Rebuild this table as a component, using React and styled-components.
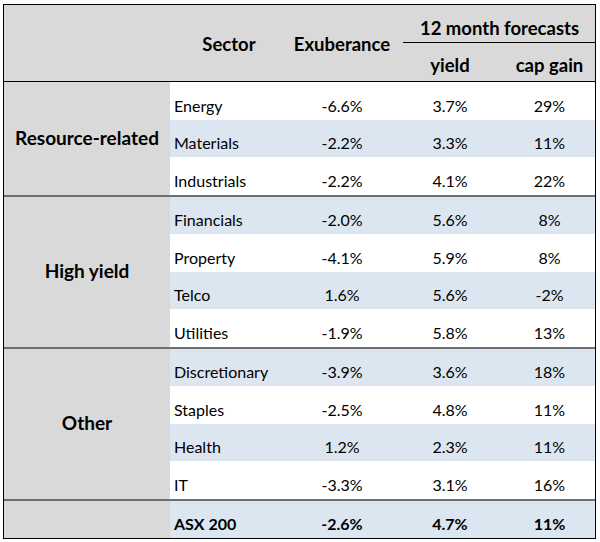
import React from 'react';
import styled, { createGlobalStyle } from 'styled-components';

const GlobalStyle = createGlobalStyle`
  html, body {
    margin: 0;
    background: #ffffff;
  }
  body {
    font-family: Lato, "Open Sans", sans-serif;
    color: #000;
  }
`;

const Page = styled.div`
  padding: 4px 4px 3px 3px;
  width: 600px;
  box-sizing: border-box;
`;

const Table = styled.div`
  border: 1px solid #000;
  width: 593px;
  box-sizing: border-box;
`;

const COLS = '166px 118px 108px 108px 1fr';

const Header = styled.div`
  display: grid;
  grid-template-columns: ${COLS};
  height: 77px;
  background: #d9d9d9;
  border-bottom: 1px solid #000;
  box-sizing: border-box;
  font-weight: 700;
  font-size: 18.5px;
`;

const HeadCell = styled.div`
  display: flex;
  align-items: center;
  justify-content: center;
  padding-top: 1px;
`;

const Forecasts = styled.div`
  grid-column: 4 / span 2;
  display: grid;
  grid-template-columns: 108px 1fr;
  grid-template-rows: 38px 1fr;
`;

const ForecastTitle = styled.div`
  grid-column: 1 / span 2;
  margin-left: 7px;
  border-bottom: 1px solid #000;
  display: flex;
  align-items: flex-end;
  justify-content: center;
  padding-bottom: 3px;
  padding-left: 1px;
`;

const SubHead = styled.div`
  display: flex;
  align-items: center;
  justify-content: center;
  padding-top: 6px;
`;

const Group = styled.div`
  display: grid;
  grid-template-columns: 166px 1fr;
  border-top: ${(p) => (p.$first ? 'none' : '2px solid #6f6f6f')};
`;

const GroupLabel = styled.div`
  background: #d9d9d9;
  display: flex;
  align-items: center;
  justify-content: center;
  font-weight: 700;
  font-size: 19px;
  padding-bottom: 2px;
`;

const Row = styled.div`
  display: grid;
  grid-template-columns: 118px 108px 108px 1fr;
  height: 37.5px;
  background: ${(p) => (p.$shaded ? '#dce6f1' : '#ffffff')};
  font-size: 16px;
  font-weight: ${(p) => (p.$bold ? 700 : 400)};
`;

const Cell = styled.div`
  display: flex;
  align-items: flex-end;
  justify-content: ${(p) => (p.$left ? 'flex-start' : 'center')};
  padding-left: ${(p) => (p.$left ? '4px' : '0')};
  padding-bottom: 5px;
`;

const groups = [
  {
    label: 'Resource-related',
    rows: [
      ['Energy', '-6.6%', '3.7%', '29%'],
      ['Materials', '-2.2%', '3.3%', '11%'],
      ['Industrials', '-2.2%', '4.1%', '22%'],
    ],
  },
  {
    label: 'High yield',
    rows: [
      ['Financials', '-2.0%', '5.6%', '8%'],
      ['Property', '-4.1%', '5.9%', '8%'],
      ['Telco', '1.6%', '5.6%', '-2%'],
      ['Utilities', '-1.9%', '5.8%', '13%'],
    ],
  },
  {
    label: 'Other',
    rows: [
      ['Discretionary', '-3.9%', '3.6%', '18%'],
      ['Staples', '-2.5%', '4.8%', '11%'],
      ['Health', '1.2%', '2.3%', '11%'],
      ['IT', '-3.3%', '3.1%', '16%'],
    ],
  },
  {
    label: '',
    bold: true,
    rows: [['ASX 200', '-2.6%', '4.7%', '11%']],
  },
];

export default function App() {
  let index = 0;
  return (
    <Page>
      <GlobalStyle />
      <Table>
        <Header>
          <HeadCell />
          <HeadCell>Sector</HeadCell>
          <HeadCell>Exuberance</HeadCell>
          <Forecasts>
            <ForecastTitle>12 month forecasts</ForecastTitle>
            <SubHead>yield</SubHead>
            <SubHead>cap gain</SubHead>
          </Forecasts>
        </Header>
        {groups.map((g, gi) => (
          <Group key={gi} $first={gi === 0}>
            <GroupLabel>{g.label}</GroupLabel>
            <div>
              {g.rows.map((r) => {
                const shaded = index % 2 === 1;
                index += 1;
                return (
                  <Row key={r[0]} $shaded={shaded} $bold={g.bold}>
                    <Cell $left>{r[0]}</Cell>
                    <Cell>{r[1]}</Cell>
                    <Cell>{r[2]}</Cell>
                    <Cell>{r[3]}</Cell>
                  </Row>
                );
              })}
            </div>
          </Group>
        ))}
      </Table>
    </Page>
  );
}
